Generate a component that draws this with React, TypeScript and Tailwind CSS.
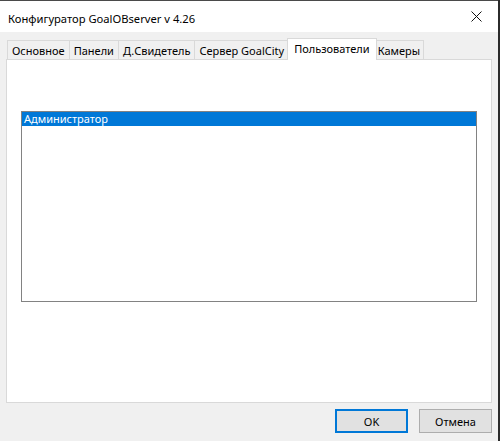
import React from 'react';

const tabs = ['Основное', 'Панели', 'Д.Свидетель', 'Сервер GoalCity', 'Пользователи', 'Камеры'];
const active = 'Пользователи';

function TabStrip() {
  return (
    <div className="flex h-[22px] items-end pl-px">
      {tabs.map((t) =>
        t === active ? (
          <div
            key={t}
            className="relative z-10 -mx-[2px] flex h-[22px] items-start border border-b-0 border-[#d9d9d9] bg-white px-[6px] pt-[2px]"
          >
            {t}
          </div>
        ) : (
          <div
            key={t}
            className="-ml-px flex h-[20px] items-start border border-b-0 border-[#d9d9d9] bg-[#f0f0f0] px-[4px] pt-[2px] first:ml-0 last:px-[3px]"
          >
            {t}
          </div>
        )
      )}
    </div>
  );
}

export default function App() {
  return (
    <div
      className="flex h-[441px] w-[500px] overflow-hidden bg-[#f0f0f0] text-[11px] leading-[15px] text-black"
      style={{ fontFamily: '"Segoe UI", "Noto Sans", sans-serif' }}
    >
      <div className="flex flex-1 flex-col">
        <div className="h-px bg-[#4a4a4a]" />
        <div className="flex h-[31px] items-center justify-between bg-white pl-[8px]">
          <span className="pt-[3px] text-[11.2px]">Конфигуратор GoalOBserver v 4.26</span>
          <div className="flex h-[31px] w-[44px] items-center justify-center">
            <svg width="11" height="11" viewBox="0 0 11 11" fill="none" stroke="#111" strokeWidth="1">
              <path d="M0.5 0.5 L10.5 10.5 M10.5 0.5 L0.5 10.5" />
            </svg>
          </div>
        </div>
        <div className="flex flex-1 flex-col px-[6px] pt-[6px]">
          <TabStrip />
          <div className="-mt-px h-[344px] border border-[#d9d9d9] bg-white px-[14px] pt-[51px]">
            <div className="h-[191px] border border-[#828282] bg-white leading-[14px]">
              <div className="bg-[#0078d7] pl-[2px] text-white">Администратор</div>
            </div>
          </div>
          <div className="flex justify-end gap-[11px] pt-[6px]">
            <button className="h-[24px] w-[73px] border-2 border-[#0078d7] bg-[#e1e1e1]">OK</button>
            <button className="h-[24px] w-[73px] border border-[#adadad] bg-[#e1e1e1]">Отмена</button>
          </div>
        </div>
      </div>
      <div className="w-[2px] bg-[#2b2b2b]" />
    </div>
  );
}
